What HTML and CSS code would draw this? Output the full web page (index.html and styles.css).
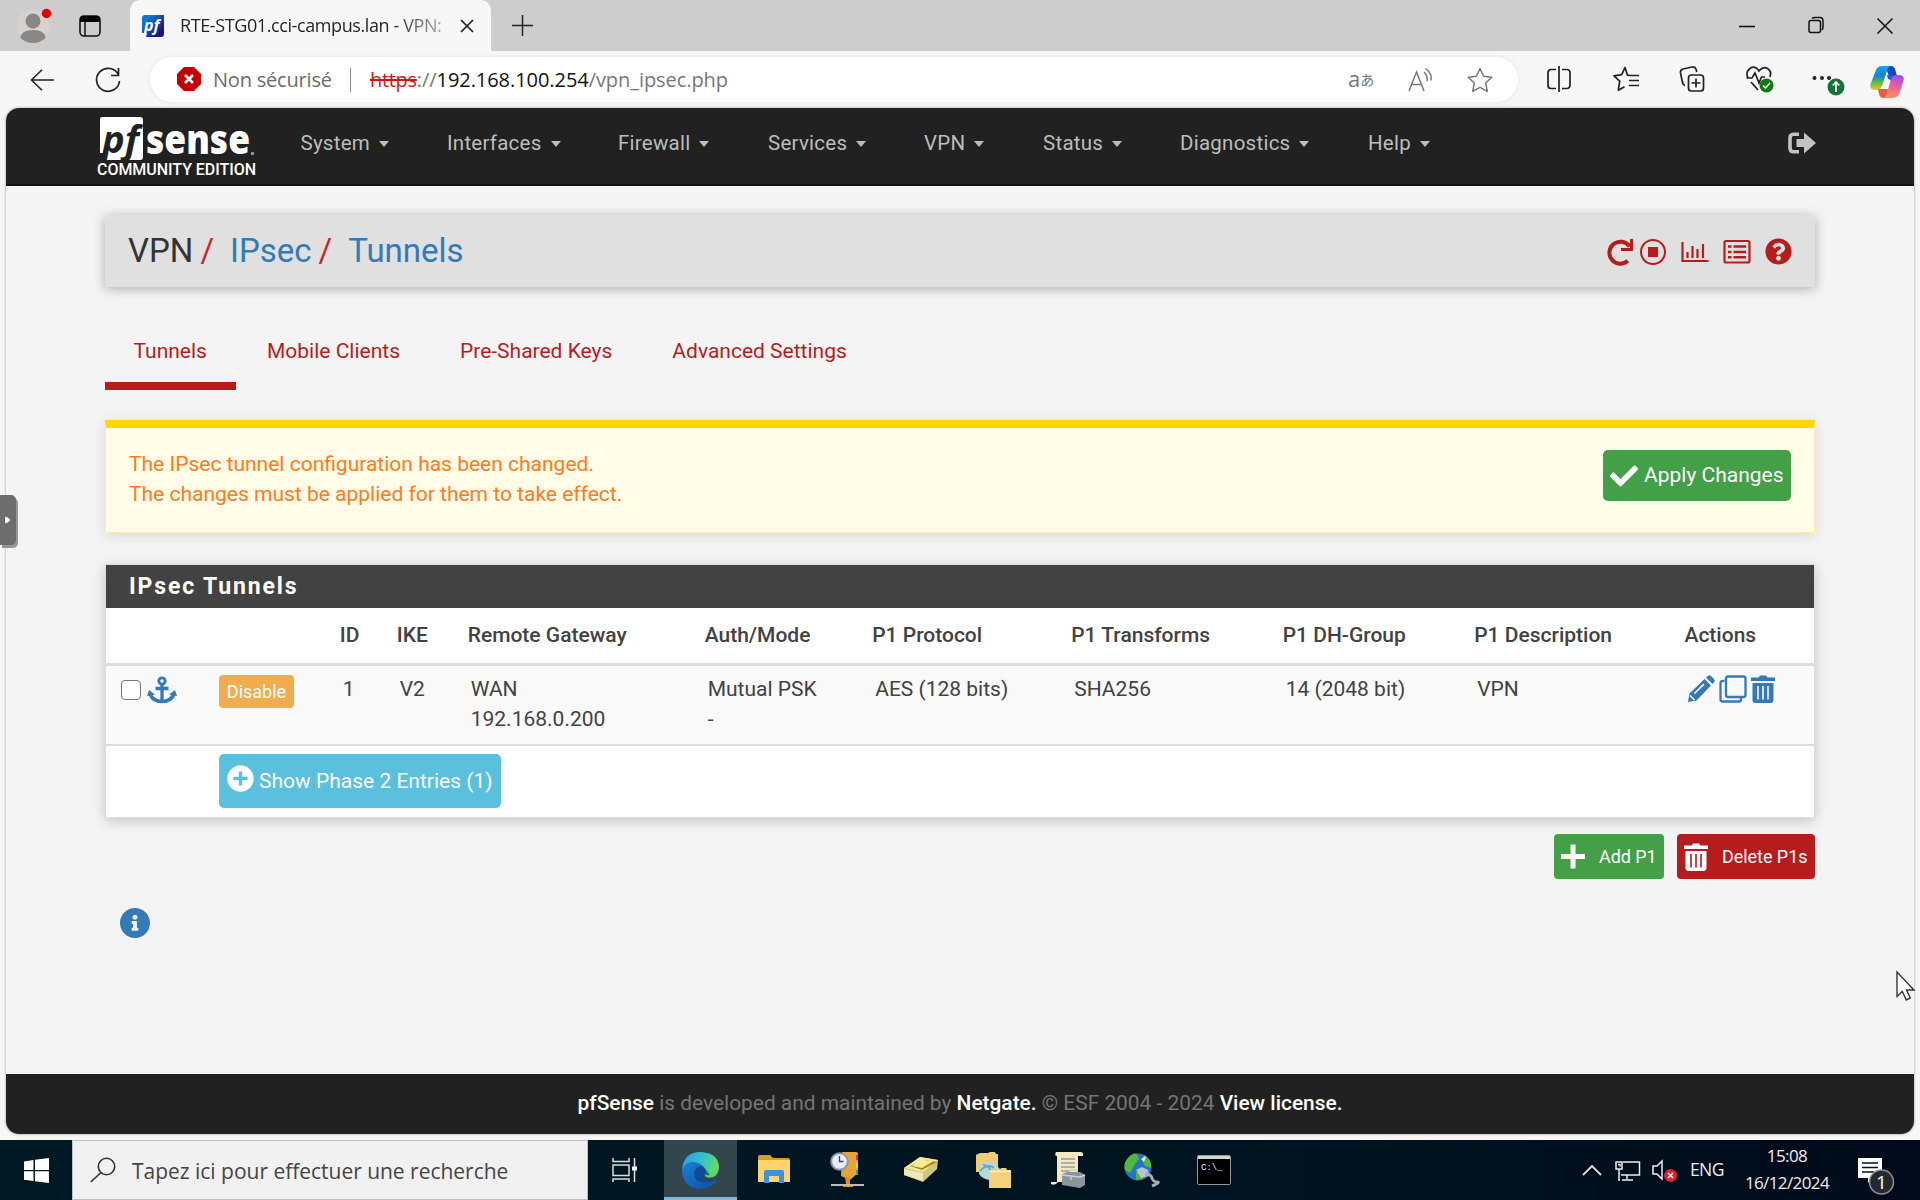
FILE: index.html
```html
<!DOCTYPE html>
<html lang="fr">
<head>
<meta charset="utf-8">
<title>RTE-STG01.cci-campus.lan - VPN: IPsec: Tunnels</title>
<link rel="stylesheet" href="styles.css">
</head>
<body>
<div class="browser">
  <div class="tabbar">
    <svg class="profile" width="36" height="40" viewBox="0 0 36 40"><circle cx="17" cy="22" r="16.500" fill="#d6d3ce"/><circle cx="17" cy="17" r="7.500" fill="#8a8785"/><path d="M4.500 34Q5 26 17 26T29.500 34Q24 39 17 39T4.500 34z" fill="#8a8785"/><circle cx="30.500" cy="9.500" r="4.700" fill="#e60000"/></svg>
    <svg class="workspaces" width="22" height="22" viewBox="0 0 22 22"><rect x="1" y="1" width="20" height="20" rx="4" fill="none" stroke="#111" stroke-width="1.600"/><path d="M1 7V4a3 3 0 0 1 3-3h14a3 3 0 0 1 3 3v3z" fill="#000"/><path d="M6 7v14" stroke="#111" stroke-width="1.500"/></svg>
    <div class="tab">
      <svg class="favicon" width="22" height="22" viewBox="0 0 22 22"><defs><linearGradient id="fv" x1="0" y1="0" x2="1" y2="1"><stop offset=".2" stop-color="#1378d4"/><stop offset=".8" stop-color="#1c1580"/></linearGradient></defs><path d="M0 3Q0 0 3 0H22V19Q22 22 19 22H4L5 18H0z" fill="url(#fv)"/><text x="2" y="16" class="favicon-text">pf</text></svg>
      <span class="tab-title">RTE-STG01.cci-campus.lan - VPN:</span>
      <svg class="tab-close" width="14" height="14" viewBox="0 0 14 14"><path d="M1 1l12 12M13 1L1 13" stroke="#222" stroke-width="1.700"/></svg>
    </div>
    <svg class="newtab" width="21" height="21" viewBox="0 0 21 21"><path d="M10.500 0v21M0 10.500h21" stroke="#222" stroke-width="1.500"/></svg>
    <div class="winbtns">
      <svg width="16" height="20" viewBox="0 0 16 20"><path d="M0 10.500h16" stroke="#111" stroke-width="1.600"/></svg>
      <svg width="16" height="20" viewBox="0 0 16 20"><rect x="1" y="4.500" width="11.500" height="12" rx="2" fill="none" stroke="#111" stroke-width="1.500"/><path d="M4 2.500Q5 1.500 7 1.500h5Q15 1.500 15 5v6q0 2-1 3" fill="none" stroke="#111" stroke-width="1.500"/></svg>
      <svg width="16" height="20" viewBox="0 0 16 20"><path d="M.500 2.500l15 15M15.500 2.500l-15 15" stroke="#111" stroke-width="1.500"/></svg>
    </div>
  </div>
  <div class="toolbar">
    <svg class="back" width="24" height="22" viewBox="0 0 24 22"><path d="M24 11H1.500M12 .800L1.500 11 12 21.200" fill="none" stroke="#222" stroke-width="1.600"/></svg>
    <svg class="reload" width="26" height="26" viewBox="0 0 26 26"><path d="M23.500 8A11.500 11.500 0 1 0 24.500 14M23.500 1v7.500H16" fill="none" stroke="#222" stroke-width="1.700"/></svg>
    <div class="address">
      <svg class="stop" width="24" height="24" viewBox="0 0 24 24"><path d="M7 0h10l7 7v10l-7 7H7l-7-7V7z" fill="#c50000"/><path d="M8 8l8 8M16 8l-8 8" stroke="#fff" stroke-width="2.600"/></svg>
      <span class="unsafe">Non sécurisé</span><i class="sep"></i>
      <span class="url"><s>https</s><span>://</span><b>192.168.100.254</b><span>/vpn_ipsec.php</span></span>
      <div class="addr-icons">
        <span class="translate">a<small>あ</small></span>
        <svg width="26" height="26" viewBox="0 0 26 26" fill="none" stroke="#777" stroke-width="1.500"><path d="M1 24L8.500 5 16 24M3.700 17.500h9.700M16 5q4 4 3 9M17.500 1.500q7 5 5.500 12"/></svg>
        <svg width="26" height="26" viewBox="0 0 26 26" fill="none" stroke="#777" stroke-width="1.500" stroke-linejoin="round"><path d="M13 1.500l3.500 7.700 8.300 1-6.100 5.800 1.600 8.400L13 20.300l-7.300 4.100L7.300 16 1.200 10.200l8.300-1z"/></svg>
      </div>
    </div>
    <div class="ext">
      <svg width="28" height="28" viewBox="0 0 28 28" fill="none" stroke="#222" stroke-width="1.700"><path d="M11 4.500H6a3 3 0 0 0-3 3v13a3 3 0 0 0 3 3h5M17 4.500h5a3 3 0 0 1 3 3v13a3 3 0 0 1-3 3h-5M14 1v26"/></svg>
      <svg width="28" height="28" viewBox="0 0 28 28" fill="none" stroke="#222" stroke-width="1.700" stroke-linejoin="round"><path d="M18 10.500l-2.500-.300L13 2.500 9.700 9.700 2 10.800l5.700 5.400-1.400 9L12.500 21.800M17 10.500h10M17 15.500h10M17 20.500h10"/></svg>
      <svg width="28" height="28" viewBox="0 0 28 28" fill="none" stroke="#222" stroke-width="1.700"><rect x="10.500" y="10" width="15" height="16" rx="3"/><path d="M18 13.500v9M13.500 18h9M7 20.500Q5 20 4.500 17.500L2.500 8Q2 5 5 4l9-2q3-.500 4 2l.800 3"/></svg>
      <svg width="28" height="28" viewBox="0 0 28 28" fill="none" stroke="#222" stroke-width="1.700"><path d="M3 13Q0 7 5 3.500T14 6Q18 1 22.500 3.500T25 12M1.500 13H7l3-5 4 10 2.500-6H20M6 17l7 8"/><circle cx="21.500" cy="20.500" r="7" fill="#107c10" stroke="none"/><path d="M18 20.500l2.500 2.500 4.500-5" stroke="#fff" stroke-width="1.500"/></svg>
      <svg class="more" width="34" height="34" viewBox="0 0 34 34"><circle cx="4.500" cy="13" r="2" fill="#222"/><circle cx="12" cy="13" r="2" fill="#222"/><circle cx="19" cy="13" r="2" fill="#222"/><circle cx="26" cy="22" r="8.500" fill="#12743a"/><path d="M26 27v-9.500M22.700 20.500L26 17 29.300 20.500" fill="none" stroke="#fff" stroke-width="1.700"/></svg>
      <svg class="copilot" width="34" height="32" viewBox="0 0 34 32"><defs><linearGradient id="c1" x1="0" y1="0" x2="0" y2="1"><stop offset="0" stop-color="#12a8f0"/><stop offset=".4" stop-color="#1780d8"/><stop offset=".65" stop-color="#52b55a"/><stop offset="1" stop-color="#f6c80a"/></linearGradient><linearGradient id="c2" x1=".5" y1="0" x2=".3" y2="1"><stop offset="0" stop-color="#a24ee8"/><stop offset=".5" stop-color="#f0609a"/><stop offset="1" stop-color="#ff9250"/></linearGradient></defs><path d="M15 0h6q3 0 4 3l2 7h-8z" fill="#1846c8"/><path d="M12 0h8q-2 1-3 5l-5 15Q10 24 7 24H4q-5-1-3.500-6L6 4Q7.500 0 12 0z" fill="url(#c1)"/><path d="M22 32h-9q3-1 4-5l4-14q1-4 4-4h4q6 0 4.500 6L29 28q-2 4-7 4z" fill="url(#c2)"/><path d="M17 9h10q-4 0-5 3l-1 2-3-1z" fill="#2458cc"/><path d="M8 23h10l-1 4q-1 5-4 5-4 0-5-9z" fill="#f05a34"/></svg>
    </div>
  </div>

  <div class="page">
    <nav class="navbar">
      <svg class="logo" width="160" height="64" viewBox="0 0 160 64"><path d="M3 5Q3 3 5 3H43Q46 3 46 6V43Q46 46 43 46H7.500L9.500 39H3z" fill="#fff"/><text x="5" y="38.500" class="logo-pf" textLength="37" lengthAdjust="spacingAndGlyphs">pf</text><text x="49" y="39.500" class="logo-sense" textLength="104" lengthAdjust="spacingAndGlyphs">sense</text><circle cx="155.500" cy="39.500" r="1.700" fill="#999"/><text x="0" y="60.500" class="logo-ce" textLength="159">COMMUNITY EDITION</text></svg>
      <ul class="menu">
        <li>System<i></i></li><li>Interfaces<i></i></li><li>Firewall<i></i></li><li>Services<i></i></li><li>VPN<i></i></li><li>Status<i></i></li><li>Diagnostics<i></i></li><li>Help<i></i></li>
      </ul>
      <svg class="logout" width="28" height="22" viewBox="0 0 28 22"><path d="M11 2.200H5.500Q2 2.200 2 6v10q0 3.800 3.500 3.800H11" fill="none" stroke="#c3c3c3" stroke-width="3.600"/><path d="M8.500 7h7.500V.500L28 11 16 21.500V15H8.500z" fill="#c3c3c3"/></svg>
    </nav>

    <main class="content">
      <header class="crumbs">
        <h1>VPN<em>/</em><a>IPsec</a><em>/</em><a>Tunnels</a></h1>
        <div class="crumb-icons">
          <svg width="28" height="28" viewBox="0 0 28 28" fill="none"><path d="M23.500 8.500A11 11 0 1 0 21.800 22.800" stroke="#b71c1c" stroke-width="4"/><path d="M25.500 1v10.500H15" stroke="#b71c1c" stroke-width="3"/></svg>
          <svg class="i-stop" width="28" height="28" viewBox="0 0 28 28"><circle cx="14" cy="14" r="12" fill="none" stroke="#b71c1c" stroke-width="2"/><rect x="9" y="9" width="10" height="10" fill="#b71c1c"/></svg>
          <svg class="i-chart" width="28" height="28" viewBox="0 0 28 28"><path d="M1.500 4v19h26M6.500 14v6M11.500 8v12M16.500 11v9M22 6v14" fill="none" stroke="#b71c1c" stroke-width="2.200"/></svg>
          <svg class="i-list" width="28" height="28" viewBox="0 0 28 28"><rect x="1.500" y="3" width="25" height="21.500" rx="1.500" fill="none" stroke="#b71c1c" stroke-width="2.200"/><path d="M5 8.500h3.500M10.500 8.500h12.500M5 14h3.500M10.500 14h12.500M5 19.300h3.500M10.500 19.300h12.500" stroke="#b71c1c" stroke-width="2.500"/></svg>
          <svg class="i-help" width="27" height="27" viewBox="0 0 512 512"><path fill="#b71c1c" d="M504 256c0 136.997-111.043 248-248 248S8 392.997 8 256C8 119.083 119.043 8 256 8s248 111.083 248 248zM262.655 90c-54.497 0-89.255 22.957-116.549 63.758-3.536 5.286-2.353 12.415 2.715 16.258l34.699 26.310c5.205 3.947 12.621 3.008 16.665-2.122 17.864-22.658 30.113-35.797 57.303-35.797 20.429 0 45.698 13.148 45.698 32.958 0 14.976-12.363 22.667-32.534 33.976C247.128 238.528 216 254.941 216 296v4c0 6.627 5.373 12 12 12h56c6.627 0 12-5.373 12-12v-1.333c0-28.462 83.186-29.647 83.186-106.667 0-58.002-60.165-102-116.531-102zM256 338c-25.365 0-46 20.635-46 46 0 25.364 20.635 46 46 46s46-20.636 46-46c0-25.365-20.635-46-46-46z"/></svg>
        </div>
      </header>

      <ul class="tabs"><li class="active">Tunnels</li><li>Mobile Clients</li><li>Pre-Shared Keys</li><li>Advanced Settings</li></ul>

      <section class="alert">
        <p>The IPsec tunnel configuration has been changed.<br>The changes must be applied for them to take effect.</p>
        <button class="apply"><svg width="28" height="28" viewBox="0 0 512 512"><path fill="#fff" d="M173.898 439.404l-166.400-166.400c-9.997-9.997-9.997-26.206 0-36.204l36.203-36.204c9.997-9.998 26.207-9.998 36.204 0L192 312.690 432.095 72.596c9.997-9.997 26.207-9.997 36.204 0l36.203 36.204c9.997 9.997 9.997 26.206 0 36.204l-294.400 294.401c-9.998 9.997-26.207 9.997-36.204-.001z"/></svg><span>Apply Changes</span></button>
      </section>

      <section class="panel">
        <h2>IPsec Tunnels</h2>
        <div class="row head"><span></span><span></span><span>ID</span><span>IKE</span><span>Remote Gateway</span><span>Auth/Mode</span><span>P1 Protocol</span><span>P1 Transforms</span><span>P1 DH-Group</span><span>P1 Description</span><span>Actions</span></div>
        <div class="row data">
          <span class="pick"><i class="check"></i><svg width="30" height="28" viewBox="0 0 30 28" fill="none" stroke="#337ab7"><circle cx="15" cy="5" r="3.200" stroke-width="2.800"/><path d="M15 8v17M8.500 12.500h13" stroke-width="3.300"/><path d="M3 18q3 7.500 12 7.500T27 18" stroke-width="3.600"/><path d="M0 20l2-6 6 4.500zM30 20l-2-6-6 4.500z" fill="#337ab7" stroke="none"/></svg></span>
          <span><button class="disable">Disable</button></span>
          <span>1</span><span>V2</span><span>WAN<br>192.168.0.200</span><span>Mutual PSK<br>-</span><span>AES (128 bits)</span><span>SHA256</span><span>14 (2048 bit)</span><span>VPN</span>
          <span class="acts">
            <svg width="28" height="28" viewBox="0 0 28 28"><path d="M1 27l1.500-8.500L17.500 4l6.500 6.500L9.500 25.500z" fill="#337ab7"/><path d="M19 2.500L21 .800q1.500-1 3 .200L27 4q1.500 1.500.200 3l-1.700 1.900z" fill="#337ab7"/><path d="M7.500 18.500l9.500-9.500" stroke="#f9f9f9" stroke-width="1.700"/><path d="M3 20.500l4.500 4.500" stroke="#f9f9f9" stroke-width="1.500"/></svg>
            <svg width="28" height="28" viewBox="0 0 28 28" fill="none" stroke="#337ab7" stroke-width="2.300"><rect x="7" y="1.500" width="19.500" height="20.500" rx="2"/><path d="M5.500 6H3.500Q1.500 6 1.500 8v16.500q0 2 2 2h16.500q2 0 2-2V23"/></svg>
            <svg width="24" height="28" viewBox="0 0 24 28"><path d="M0 2.500h7.500L9 .500h6l1.500 2H24v3.500H0zM1.500 8h21v17q0 3-3 3h-15q-3 0-3-3z" fill="#337ab7"/><path d="M7 11v13.500M12 11v13.500M17 11v13.500" stroke="#f9f9f9" stroke-width="1.600"/></svg>
          </span>
        </div>
        <div class="phase2"><button class="show"><svg width="27" height="27" viewBox="0 0 27 27"><circle cx="13.500" cy="13.500" r="13.200" fill="#fff"/><path d="M13.500 6.500v14M6.500 13.500h14" stroke="#5bc0de" stroke-width="3.300"/></svg>Show Phase 2 Entries (1)</button></div>
      </section>

      <div class="actions">
        <button class="add"><svg width="24" height="25" viewBox="0 0 24 25"><path d="M12 .500v24M0 12.500h24" stroke="#fff" stroke-width="5"/></svg>Add P1</button>
        <button class="del"><svg width="24" height="28" viewBox="0 0 24 28"><path d="M0 2.500h7.500L9 .500h6l1.500 2H24v3.500H0zM1.500 8h21v17q0 3-3 3h-15q-3 0-3-3z" fill="#fff"/><path d="M7 11v13.500M12 11v13.500M17 11v13.500" stroke="#b71c1c" stroke-width="1.600"/></svg>Delete P1s</button>
      </div>
      <svg class="info" width="30" height="30" viewBox="8 8 496 496"><path fill="#337ab7" d="M256 8C119.043 8 8 119.083 8 256c0 136.997 111.043 248 248 248s248-111.003 248-248C504 119.083 392.957 8 256 8zm0 110c23.196 0 42 18.804 42 42s-18.804 42-42 42-42-18.804-42-42 18.804-42 42-42zm56 254c0 6.627-5.373 12-12 12h-88c-6.627 0-12-5.373-12-12v-24c0-6.627 5.373-12 12-12h12v-64h-12c-6.627 0-12-5.373-12-12v-24c0-6.627 5.373-12 12-12h64c6.627 0 12 5.373 12 12v100h12c6.627 0 12 5.373 12 12v24z"/></svg>
    </main>
    <footer class="footer"><b>pfSense</b> is developed and maintained by <b>Netgate.</b> © ESF 2004 - 2024 <b>View license.</b></footer>
  </div>
  <div class="handle"><svg width="6" height="8" viewBox="0 0 6 8"><path d="M0 1h2l3.500 3L2 7H0z" fill="#fff"/></svg></div>
  <svg class="cursor" width="20" height="31" viewBox="0 0 20 31"><path d="M1 1v24.500l5.300-5 4 8.500 4-2-3.800-8H18z" fill="#fff" stroke="#333" stroke-width="1.400"/></svg>
</div>

<div class="taskbar">
  <div class="start"><svg width="25" height="25" viewBox="0 0 25 25"><path d="M0 3.500L9.500 2v10H0zM11 1.800L25 0v12H11zM0 13.200h9.500V23L0 21.700zM11 13.200h14V25l-14-1.800z" fill="#fff"/></svg></div>
  <div class="search"><svg width="26" height="26" viewBox="0 0 26 26"><circle cx="16.500" cy="9.500" r="8.200" fill="none" stroke="#333" stroke-width="1.600"/><path d="M11 15.500L.800 25" stroke="#333" stroke-width="1.700"/></svg><span>Tapez ici pour effectuer une recherche</span></div>
  <div class="apps">
    <div><svg width="26" height="24" viewBox="0 0 26 24" fill="none" stroke="#ddd" stroke-width="1.500"><rect x="1" y="7" width="16" height="10.500"/><path d="M1 0v3.500h16V0M1 24v-3h16v3M22.500 0v24"/><path d="M20 8.500h5v4h-5z" fill="#fff" stroke="none"/></svg></div>
    <div class="on"><svg width="37" height="37" viewBox="0 0 36 36"><defs><linearGradient id="e1" x1="0" y1=".3" x2="1" y2=".5"><stop offset="0" stop-color="#2aa0e6"/><stop offset=".55" stop-color="#35c3c8"/><stop offset="1" stop-color="#6ade50"/></linearGradient><linearGradient id="e2" x1="0" y1="0" x2="1" y2="1"><stop offset="0" stop-color="#1a7fd6"/><stop offset="1" stop-color="#114e9c"/></linearGradient></defs><circle cx="18" cy="18" r="18" fill="#0f67bd"/><path d="M0 17Q2 0 18 0q17 1 18 14 0 9-8 11-7 1-6-3 2-3 0-6-4-6-12-6Q4 10 0 17z" fill="url(#e1)"/><path d="M0 18Q3 9 12 10q7 1 9 6-7-2-9 4-2 9 9 10 6 1 11-3-5 9-14 9Q1 35 0 18z" fill="url(#e2)"/><path d="M21 14q-8-1-9 6-1 7 5 9 9 3 16-2 3-2 2-1-2 2-3 3" fill="#123f86" opacity=".7"/><path d="M36 15q0 9-8 10-7 1-6-3 5 3 14-7z" fill="#5bd45c"/><path d="M36 17q-2 8-9 8-5 0-5-3l-2 3q4 5 15 1 2-4 1-9z" fill="#33454d" opacity=".9"/></svg></div>
    <div><svg width="34" height="30" viewBox="0 0 34 30"><path d="M1 2q0-2 2-2h10l3 3H31q2 0 2 2v21H1z" fill="#d99e1e"/><path d="M1 5h32v22H1z" fill="#fdd36c"/><path d="M7 28V17q0-2 2-2h16q2 0 2 2v11h-5v-7H12v7z" fill="#3c92dc"/></svg></div>
    <div><svg width="34" height="36" viewBox="0 0 34 36"><path d="M12 0h14q2 0 2 3v18l-8 7-9-4z" fill="#e7a33c"/><path d="M26 3h2v5h-2z" fill="#e33"/><path d="M26 11h2v5h-2z" fill="#dd0"/><path d="M26 18h2v5h-2z" fill="#3ab04a"/><path d="M15 25h5v7h3v3H13v-3h3z" fill="#d59418"/><path d="M1 33h33" stroke="#bbb" stroke-width="2"/><circle cx="9.500" cy="9.500" r="8.300" fill="#e8edf5" stroke="#8d96a6" stroke-width="2"/><path d="M9.500 4v5.500h4" fill="none" stroke="#445" stroke-width="1.300"/></svg></div>
    <div><svg width="36" height="26" viewBox="0 0 36 26"><path d="M1 11L17 0l18 3-1 9-14 13L1 18z" fill="#cfc774"/><path d="M1 11L17 0l18 3-15 12z" fill="#f0e9a0"/><path d="M7 9L25 3l9 2-15 8z" fill="#a58a1b"/><path d="M9 9q8-7 23-6L19 11z" fill="#ffe98b"/><path d="M1 12l19 4v8L1 18z" fill="#eee9b6"/></svg></div>
    <div><svg width="36" height="36" viewBox="0 0 36 36"><path d="M0 3l4-2h8l2-1h5l1 2h2v18H0z" fill="#f0cd73"/><path d="M4 13q10-8 18 2l5 5-8 7q-10 3-16-5z" fill="#b4dbe3"/><path d="M7 13q6 0 8 7M4 19q8-8 14-3" fill="none" stroke="#6ba6ba" stroke-width="2"/><path d="M13 18h11l1-2h5l1 2h4v18H13z" fill="#f4d27c"/><path d="M14 19.500h21" stroke="#fff1bd" stroke-width="1.500"/></svg></div>
    <div><svg width="34" height="36" viewBox="0 0 34 36"><path d="M5 0h24q4 0 3 4h-5v26H7q-3 4-7 2v-2h6V4Q3 4 5 0z" fill="#f3e9c3"/><path d="M10 7h14M10 11h14M10 15h14M10 19h9" stroke="#9c9a98" stroke-width="1.500"/><path d="M11 22l5-2h13l5 3v10l-5 3-18-3z" fill="#8b959c"/><path d="M11 23l18 2 5-2M19 20v-2h7v2M20 24v4" fill="none" stroke="#cbd2d6" stroke-width="1.500"/></svg></div>
    <div><svg width="34" height="34" viewBox="0 0 34 34"><circle cx="14" cy="14" r="13.500" fill="#2773c9"/><path d="M4 5q5-6 9-4l2 5-4 5-5 9-5-3q-2-7 3-12zM20 2q8 4 7 13l-6-2-3-6zM12 19l6 1 1 6-7 1z" fill="#52b83a"/><path d="M17 6l5-3-2 6z" fill="#dff3ff"/><path d="M12 17l6-3 6 3 1 6-8 2z" fill="#b9c4c9"/><path d="M21 21q6 0 7 4t5 4-5 4" fill="none" stroke="#9fb0b6" stroke-width="3"/></svg></div>
    <div><svg width="34" height="30" viewBox="0 0 34 30"><rect x=".5" y=".5" width="33" height="29" rx="1" fill="#000" stroke="#999"/><path d="M1 1h32v3H1z" fill="#d5d5d5"/><text x="4" y="15" class="cmd">C:\_</text></svg></div>
  </div>
  <div class="tray">
    <svg class="chev" width="20" height="12" viewBox="0 0 20 12"><path d="M1 11l9-9 9 9" fill="none" stroke="#ddd" stroke-width="1.800"/></svg>
    <svg class="net" width="26" height="22" viewBox="0 0 26 22" fill="none" stroke="#eee" stroke-width="1.500"><path d="M8 2h16.500v13H6M1 2h6v7H1zM4 9v12M12 15v4M7 20h11M3 4.500h2v2"/></svg>
    <svg class="vol" width="26" height="24" viewBox="0 0 26 24"><path d="M1 7h4l5-5v18l-5-5H1z" fill="none" stroke="#eee" stroke-width="1.500"/><circle cx="18.500" cy="16.500" r="6.500" fill="#df2030"/><path d="M16 14l5 5M21 14l-5 5" stroke="#fff" stroke-width="1.600"/></svg>
    <span class="lang">ENG</span>
    <span class="clock">15:08<br>16/12/2024</span>
    <svg class="notif" width="38" height="38" viewBox="0 0 38 38"><path d="M0 0h24v20h-9l-5 5v-5H0z" fill="#fff"/><path d="M4 5h16M4 9.500h16M4 14h12" stroke="#00101c" stroke-width="1.500"/><circle cx="23.500" cy="24" r="12" fill="#25292d" stroke="#8e9296" stroke-width="1.500"/><text x="18" y="30.500" class="count">1</text></svg>
  </div>
</div>
</body>
</html>
```
FILE: styles.css
```css
* { box-sizing: border-box; }
body { margin: 0; width: 1920px; height: 1200px; overflow: hidden; background: #f7f7f7; font-family: Roboto, sans-serif; }
svg { display: block; flex: none; overflow: visible; }
ul, p, h1, h2 { margin: 0; padding: 0; list-style: none; font-weight: 400; }
button { font: inherit; border: 0; padding: 0; color: #fff; display: flex; align-items: center; white-space: nowrap; }
.browser { position: relative; height: 1140px; }

/* tab strip */
.tabbar { display: flex; height: 51px; background: #cdcdcd; }
.profile { margin: 4px 0 0 16px; }
.workspaces { margin: 15px 0 0 27px; }
.tab { display: flex; width: 361px; height: 51px; margin-left: 29px; padding-left: 12px; background: #f7f7f7; border-radius: 10px 10px 0 0; }
.favicon { margin-top: 15px; }
.favicon-text { font: italic 700 16px "Open Sans", sans-serif; fill: #fff; }
.tab-title { width: 263px; margin: 12px 0 0 16px; font: 18px/27px "Open Sans", sans-serif; letter-spacing: -.4px; white-space: nowrap; color: transparent; background: linear-gradient(90deg, #222 80%, #aaa); background-clip: text; }
.tab-close { margin: 19px 0 0 17px; }
.newtab { margin: 15px 0 0 21px; }
.winbtns { display: flex; gap: 53px; margin: 16px 27px 0 auto; }

/* address row */
.toolbar { display: flex; height: 57px; padding-top: 6px; }
.back { margin: 12px 0 0 30px; }
.reload { margin: 10px 0 0 41px; }
.address { display: flex; width: 1368px; height: 45px; margin-left: 29px; padding-left: 27px; background: #fff; border-radius: 23px; box-shadow: 0 0 5px #e4e4e4; font: 20px/45px "Open Sans", sans-serif; }
.stop { margin-top: 10px; }
.unsafe { width: 123px; margin-left: 12px; letter-spacing: -.2px; color: #6b6b6b; white-space: nowrap; }
.sep { width: 1px; height: 24px; margin: 11px 19px 0 14px; background: #888; }
.url { letter-spacing: -.06px; color: #777; white-space: nowrap; }
.url s { color: #d01818; letter-spacing: -.3px; }
.url b { font-weight: 400; color: #111; }
.addr-icons { display: flex; gap: 33px; margin: 10px 25px 0 auto; }
.translate { display: flex; width: 27px; font: 22px/23px "Open Sans", sans-serif; color: #777; }
.translate small { font: 14px/25px "Noto Sans CJK JP", sans-serif; }
.ext { display: flex; gap: 38.500px; margin: 8px 0 0 27px; }
.ext .more { margin-left: -1px; }
.ext .copilot { margin: 1px 0 0 -13px; }

/* pfSense page */
.page { display: flex; flex-direction: column; width: 1908px; height: 1026px; margin-left: 6px; background: #f4f4f4; border-radius: 13px; overflow: hidden; box-shadow: 0 0 3px #999; }
.navbar { display: flex; height: 78px; padding: 6px 98px 0 91px; background: #212121; border-bottom: 2px solid #111; }
.logo-pf { font: italic 700 38px "Open Sans", sans-serif; fill: #212121; }
.logo-sense { font: 800 41px "Open Sans", sans-serif; fill: #fff; }
.logo-ce { font: 500 16px Roboto, sans-serif; fill: #fff; }
.menu { display: grid; align-items: start; grid-template-columns: 146.500px 171px 150px 156px 119px 137px 188px 80px; margin: 14px 0 0 43.500px; font-size: 20.500px; line-height: 30px; letter-spacing: .25px; color: #bdbdbd; }
.menu li { display: flex; align-items: center; gap: 9px; }
.menu i { border: 5.500px solid transparent; border-top: 6px solid #bdbdbd; border-bottom: 0; margin-top: 2px; }
.logout { margin: 18px 0 0 auto; }

.content { flex: 1; display: flex; flex-direction: column; padding: 29px 99px 0; font-size: 21px; line-height: 30px; color: #424242; }
.crumbs { display: flex; height: 72px; padding: 0 23px 0 23px; background: #e0e0e0; border-radius: 3px; box-shadow: 0 2px 12px rgba(0,0,0,.3); }
.crumbs h1 { font-size: 33px; line-height: 72px; color: #333; }
.crumbs a { color: #337ab7; }
.crumbs em { margin: 0 16px 0 7px; font-style: normal; color: #c62828; }
.crumb-icons { display: flex; margin: 23px 0 0 auto; }
.i-stop { margin-left: 5px; }
.i-chart { margin-left: 14px; }
.i-list { margin-left: 14px; }
.i-help { margin-left: 14px; }
.tabs { display: flex; height: 103px; margin-top: 30px; }
.tabs li { height: 73px; padding: 19px 30px 0 30px; font-size: 21px; color: #b71c1c; }
.tabs .active { width: 131px; padding: 19px 0 0 28.500px; border-bottom: 8px solid #b71c1c; }
.tabs li:nth-child(2) { padding-left: 31px; }
.alert { display: flex; justify-content: space-between; height: 113px; padding: 21px 23px 0; background: #fffde7; border: 1px solid #ffecb3; border-top: 8px solid #ffd600; box-shadow: 0 2px 12px rgba(0,0,0,.12); color: #ff7a20; }
.alert .apply { width: 188px; height: 51px; margin-top: 1px; padding-left: 7px; gap: 6px; background: #43a047; border-radius: 5px; }
.apply span { margin-top: -2px; }
.panel { height: 254px; margin-top: 31px; background: #fff; border: 1px solid #ddd; box-shadow: 0 3px 12px rgba(0,0,0,.2); }
.panel h2 { height: 43px; padding-left: 23px; background: #424242; font-size: 23px; line-height: 43px; font-weight: 700; letter-spacing: 1.850px; color: #fff; }
.row { display: grid; grid-template-columns: 113px 120.700px 57px 71px 237px 167.500px 199px 211.500px 191.500px 210.300px 128px; }
.head { height: 58px; padding-top: 12px; font-weight: 500; border-bottom: 3px solid #ddd; white-space: nowrap; font-size: 21px; }
.data { height: 80px; padding-top: 8px; background: #f9f9f9; border-bottom: 2px solid #ddd; }
.data > span:nth-child(n+3) { padding-left: 3px; }
.pick { display: flex; gap: 6px; padding: 2px 0 0 15px; }
.check { width: 20px; height: 20px; margin-top: 4px; background: #fff; border: 1.500px solid #767676; border-radius: 4px; }
.disable { width: 75px; height: 33px; margin-top: 1px; justify-content: center; background: #f0ad4e; border-radius: 4px; font-size: 18px; }
.acts { display: flex; gap: 4px; margin-top: 1px; }
.phase2 { padding: 8px 0 0 113px; }
.show { width: 282px; height: 54px; padding-left: 8px; gap: 5px; background: #5bc0de; border-radius: 5px; }
.show svg { margin-top: -5px; }
.actions { display: flex; justify-content: flex-end; gap: 13px; margin-top: 16px; }
.actions button { height: 45px; padding-left: 7px; gap: 14px; border-radius: 4px; font-size: 18px; letter-spacing: -.05px; }
.actions .add { width: 110px; background: #43a047; }
.actions .del { width: 138px; background: #b71c1c; }
.info { margin: 29px 0 0 15px; }
.footer { height: 60px; background: #212121; color: #757575; font-size: 20.900px; line-height: 58px; text-align: center; }
.footer b { font-weight: 500; color: #fff; }
.handle { position: absolute; left: 0; top: 495px; width: 16px; height: 50px; padding: 21px 0 0 5px; background: #6d6d6d; border-radius: 0 5px 5px 0; box-shadow: 2px 3px 0 #969696; }
.cursor { position: absolute; left: 1896px; top: 971px; }

/* Windows taskbar */
.taskbar { display: flex; height: 60px; background: linear-gradient(90deg, #001a24, #00121f 70%, #000a1a); color: #eee; font-family: "Open Sans", sans-serif; }
.start { width: 72px; padding: 18px 0 0 24px; }
.search { display: flex; width: 516px; padding: 15px 0 0 17px; gap: 16px; background: #f1f1f1; border: 1px solid #c0c0c0; font-size: 21px; line-height: 30px; letter-spacing: -.02px; color: #444; white-space: nowrap; }
.search svg { margin-top: 1px; }
.apps { display: flex; }
.apps div { display: flex; width: 73.400px; height: 60px; align-items: center; justify-content: center; }
.apps div:first-child { width: 76px; padding-right: 3px; }
.apps .on { background: #33454d; border-bottom: 3px solid #76b9ed; padding-top: 3px; }
.cmd { font: 9px "Liberation Mono", monospace; fill: #eee; }
.tray { display: flex; margin-left: auto; width: 338px; }
.chev { margin-top: 24px; }
.net { margin: 20px 0 0 13px; }
.vol { margin: 19px 0 0 11px; }
.lang { width: 38px; margin: 15px 0 0 12px; font-size: 17.500px; line-height: 28px; letter-spacing: -.6px; }
.clock { width: 90px; margin: 2px 0 0 14px; font-size: 17px; line-height: 27px; letter-spacing: -.6px; text-align: center; }
.notif { margin: 18px 0 0 26px; }
.count { font: 19px "Open Sans", sans-serif; fill: #fff; }
```
